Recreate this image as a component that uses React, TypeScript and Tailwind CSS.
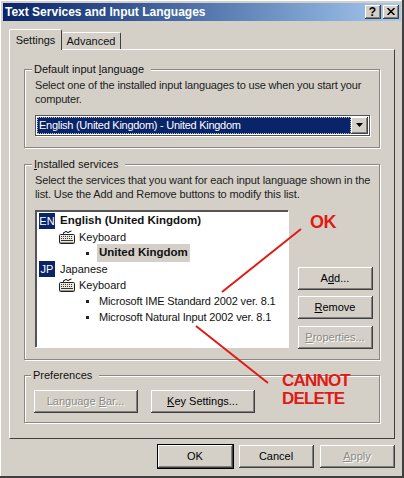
import type { ReactNode } from "react"

const raised = "border-r border-b border-r-[#404040] border-b-[#404040] shadow-[inset_1px_1px_0_#ffffff,inset_-1px_-1px_0_#808080]"

const Btn = ({ children, className = "", disabled = false }: { children: ReactNode; className?: string; disabled?: boolean }) => (
  <div
    className={`h-[23px] flex items-center justify-center bg-[#d4d0c8] text-[11px] ${raised} ${
      disabled ? "text-[#8c8a84] [text-shadow:1px_1px_0_#ffffff]" : "text-black"
    } ${className}`}
  >
    <span>{children}</span>
  </div>
)

const Group = ({ title, className = "", children }: { title: ReactNode; className?: string; children: ReactNode }) => (
  <div className={`border border-[#8a8880] shadow-[inset_1px_1px_0_#ffffff,1px_1px_0_#ffffff] ${className}`}>
    <div className="-mt-[8px] -ml-[3px] w-fit bg-[#d4d0c8] pl-[2px] pr-[7px] text-[11px] leading-[14px] text-[#111]">{title}</div>
    {children}
  </div>
)

const Keyboard = () => (
  <svg width="16" height="14" viewBox="0 0 16 14" className="shrink-0">
    <path d="M4.5 4 V2.5 H6 V1.5 H8 V2.5 H10 V1.5 H12 V0.5" fill="none" stroke="#333" strokeWidth="1" />
    <rect x="0.5" y="4.5" width="15" height="9" rx="1" fill="#ece9e0" stroke="#222" />
    <path d="M2 6.5 H14 M2 8.5 H14" stroke="#333" strokeWidth="1" strokeDasharray="1 1" />
    <path d="M2 10.5 H14" stroke="#333" strokeWidth="1" />
    <path d="M1 12.5 H15" stroke="#9a9890" />
  </svg>
)

const Lang = ({ code }: { code: string }) => (
  <span className="flex h-[16px] w-[16px] shrink-0 items-center justify-center bg-[#0a246a] text-[11px] leading-none text-white">{code}</span>
)

const Bullet = () => <span className="h-[3px] w-[3px] shrink-0 bg-[#222]" />

const Row = ({ pl, children }: { pl: string; children: ReactNode }) => (
  <div className={`flex h-[16px] items-center whitespace-nowrap ${pl}`}>{children}</div>
)

export default function App() {
  return (
    <div
      className="relative h-[478px] w-[404px] overflow-hidden border-r-2 border-b-2 border-r-[#404040] border-b-[#404040] bg-[#d4d0c8] pt-[3px] pl-[3px] pr-[1px] shadow-[inset_1px_1px_0_#ffffff]"
      style={{ fontFamily: '"Liberation Sans", Arial, sans-serif' }}
    >
      {/* title bar */}
      <div className="flex h-[18px] items-center justify-between bg-gradient-to-r from-[#0a246a] to-[#a6caf0] pl-[2px] pr-[2px]">
        <span className="text-[12px] font-bold text-white">Text Services and Input Languages</span>
        <div className="flex gap-[2px]">
          <div className={`flex h-[14px] w-[16px] items-center justify-center bg-[#d4d0c8] text-[12px] font-bold leading-none text-black ${raised}`}>?</div>
          <div className={`flex h-[14px] w-[16px] items-center justify-center bg-[#d4d0c8] ${raised}`}>
            <svg width="8" height="7" viewBox="0 0 8 7">
              <path d="M0.5 0 L7.5 7 M7.5 0 L0.5 7" stroke="#000" strokeWidth="1.5" />
            </svg>
          </div>
        </div>
      </div>

      <div className="pl-[6px] pr-[6px]">
        {/* tabs */}
        <div className="mt-[8px] flex h-[20px] items-end">
          <div className="relative z-10 -mb-[1px] flex h-[21px] w-[53px] items-center justify-center rounded-t-[2px] border-t border-l border-white border-r border-r-[#404040] bg-[#d4d0c8] text-[11px] text-[#111]">
            Settings
          </div>
          <div className="flex h-[17px] w-[59px] items-center justify-center rounded-t-[2px] border-t border-white border-r border-r-[#404040] text-[11px] text-[#111]">
            Advanced
          </div>
        </div>

        {/* tab panel */}
        <div className="h-[390px] border-t border-l border-white border-r border-b border-r-[#404040] border-b-[#404040] px-[14px] pt-[19px]">
          <Group title={<>Default input <u>l</u>anguage</>} className="h-[79px] w-[356px] pl-[10px]">
            <p className="mt-[3px] w-[340px] text-[11px] leading-[13.5px] tracking-[-0.18px] text-[#222]">
              Select one of the installed input languages to use when you start your computer.
            </p>
            <div className="mt-[9px] flex h-[21px] w-[335px] items-center border border-[#555] bg-white p-[1px] shadow-[1px_1px_0_#ffffff]">
              <div className="flex h-full flex-1 items-center bg-[#0a246a] pl-[2px] text-[11px] tracking-[-0.27px] text-white outline-1 -outline-offset-1 outline-dotted outline-[#c0c0c0]">
                English (United Kingdom) - United Kingdom
              </div>
              <div className={`flex h-full w-[17px] items-center justify-center bg-[#d4d0c8] ${raised}`}>
                <svg width="7" height="4" viewBox="0 0 7 4">
                  <path d="M0 0 H7 L3.5 4 Z" fill="#000" />
                </svg>
              </div>
            </div>
          </Group>

          <Group title={<><u>I</u>nstalled services</>} className="mt-[16px] h-[196px] w-[356px] pl-[10px]">
            <p className="mt-[3px] w-[340px] text-[11px] leading-[13.5px] tracking-[-0.12px] text-[#222]">
              Select the services that you want for each input language shown in the list. Use the Add and Remove buttons to modify this list.
            </p>
            <div className="mt-[9px] flex gap-[10px]">
              <div className="h-[137px] w-[253px] border-t-2 border-l-2 border-t-[#555] border-l-[#555] bg-white pt-[1px] pl-[2px] text-[11px] text-[#111] shadow-[1px_1px_0_#ffffff]">
                <Row pl="pl-0">
                  <Lang code="EN" />
                  <span className="ml-[5px] text-[11.5px] font-bold">English (United Kingdom)</span>
                </Row>
                <Row pl="pl-[20px]">
                  <Keyboard />
                  <span className="ml-[4px]">Keyboard</span>
                </Row>
                <Row pl="pl-[47px]">
                  <Bullet />
                  <span className="ml-[8px] bg-[#d4d0c8] px-[2px] text-[11.5px] font-bold">United Kingdom</span>
                </Row>
                <Row pl="pl-0">
                  <Lang code="JP" />
                  <span className="ml-[5px]">Japanese</span>
                </Row>
                <Row pl="pl-[20px]">
                  <Keyboard />
                  <span className="ml-[4px]">Keyboard</span>
                </Row>
                <Row pl="pl-[47px]">
                  <Bullet />
                  <span className="ml-[10px] tracking-[-0.14px]">Microsoft IME Standard 2002 ver. 8.1</span>
                </Row>
                <Row pl="pl-[47px]">
                  <Bullet />
                  <span className="ml-[10px] tracking-[-0.14px]">Microsoft Natural Input 2002 ver. 8.1</span>
                </Row>
              </div>
              <div className="flex flex-col pt-[57px]">
                <Btn className="w-[75px]">A<u>d</u>d...</Btn>
                <Btn className="mt-[6px] w-[75px]"><u>R</u>emove</Btn>
                <Btn className="mt-[7px] w-[75px]" disabled><u>P</u>roperties...</Btn>
              </div>
            </div>
          </Group>

          <Group title="Preferences" className="mt-[15px] h-[48px] w-[356px] pl-[9px]">
            <div className="mt-[8px] flex gap-[13px]">
              <Btn className="w-[104px]" disabled>Language <u>B</u>ar...</Btn>
              <Btn className="w-[104px]"><u>K</u>ey Settings...</Btn>
            </div>
          </Group>
        </div>

        {/* dialog buttons */}
        <div className="mt-[6px] flex justify-end gap-[6px]">
          <Btn className="w-[75px] outline outline-1 outline-black">OK</Btn>
          <Btn className="w-[75px]">Cancel</Btn>
          <Btn className="w-[75px]" disabled><u>A</u>pply</Btn>
        </div>
      </div>

      {/* red annotations painted over the dialog */}
      <svg width="404" height="478" className="absolute left-0 top-0">
        <path d="M301 229 L222 292" stroke="#e01a14" strokeWidth="2" />
        <path d="M196 326 L268 383" stroke="#e01a14" strokeWidth="2" />
      </svg>
      <div className="absolute left-[310px] top-[212px] text-[18px] font-bold leading-[20px] tracking-[-0.5px] text-[#e01a14]">OK</div>
      <div className="absolute left-[282px] top-[372px] text-[17px] font-bold leading-[18px] tracking-[-0.8px] text-[#e01a14]">
        CANNOT
        <br />
        DELETE
      </div>
    </div>
  )
}
